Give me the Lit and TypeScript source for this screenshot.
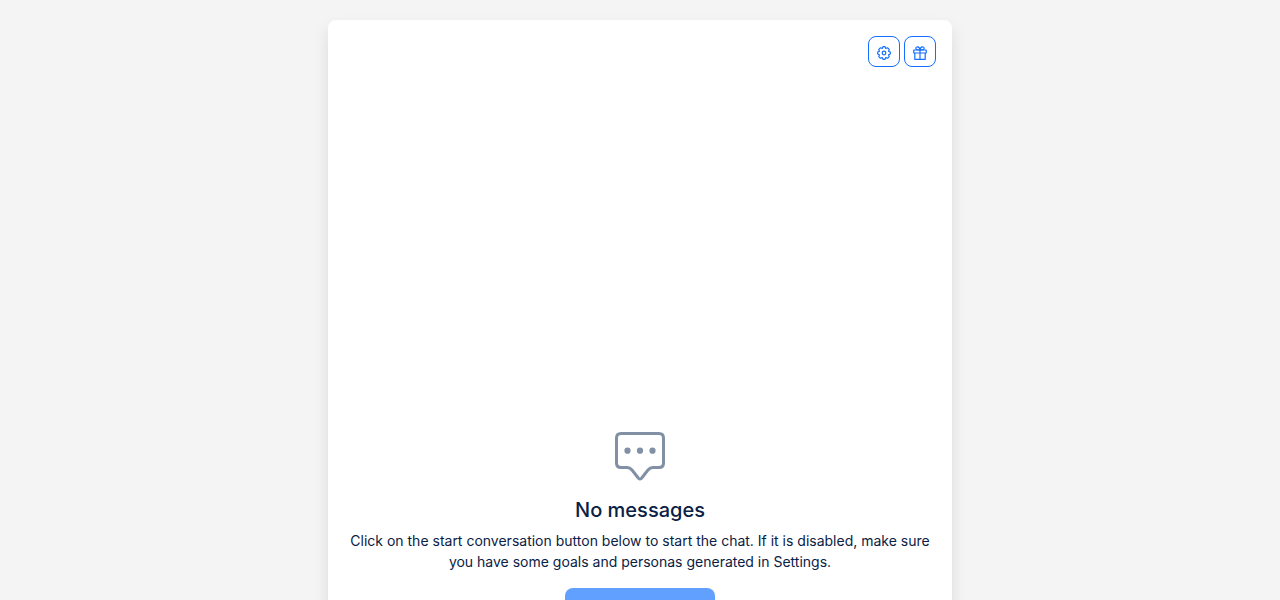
import { LitElement, html, css, svg } from "lit";
import { customElement, property } from "lit/decorators.js";

const gearIcon = svg`
  <path d="M-1-6.300H1L1.800-4.600 3.700-5.200 5.200-3.700 4.600-1.800 6.300-1V1L4.600 1.800 5.200 3.700 3.700 5.200 1.800 4.600 1 6.300H-1L-1.800 4.600-3.700 5.200-5.200 3.700-4.600 1.800-6.300 1V-1L-4.600-1.800-5.200-3.700-3.700-5.200-1.800-4.600Z"/>
  <circle r="1.800"/>`;

const giftIcon = svg`
  <path d="M-6.200-3H6.200V0H-6.200ZM-5.200 0V6.300H5.200V0M0-3V6.300"/>
  <path d="M0-3C-1.500-3-4.200-3-4.200-4.800S-.6-7.200 0-3C.6-7.200 4.200-6.600 4.200-4.800S1.500-3 0-3Z"/>`;

@customElement("app-root")
export class AppRoot extends LitElement {
  @property({ type: Boolean }) ready = false;

  static styles = css`
    :host {
      display: block;
      box-sizing: border-box;
      height: 100vh;
      overflow: auto;
      scrollbar-width: none;
      padding: 20px 16px;
      background: #f4f4f4;
      color: #0a2145;
      font: 400 14px/21px Inter, sans-serif;
    }
    .card {
      box-sizing: border-box;
      max-width: 624px;
      min-height: 984px;
      margin: 0 auto;
      padding: 16px;
      display: flex;
      flex-direction: column;
      background: #fff;
      border-radius: 8px;
      box-shadow: 0 8px 16px rgba(0, 0, 0, 0.1);
    }
    .toolbar {
      display: flex;
      justify-content: flex-end;
      gap: 4px;
    }
    .tool {
      box-sizing: border-box;
      width: 32px;
      height: 31px;
      padding: 2px 0 0;
      display: grid;
      place-items: center;
      color: #146eff;
      background: transparent;
      border: 1px solid currentColor;
      border-radius: 8px;
      cursor: pointer;
    }
    .tool svg {
      width: 14px;
      height: 14px;
      fill: none;
      stroke: currentColor;
      stroke-width: 1.2;
      stroke-linejoin: round;
    }
    .messages {
      flex: 1;
      display: flex;
      flex-direction: column;
      align-items: center;
      justify-content: center;
      text-align: center;
    }
    .bubble {
      width: 50px;
      height: 50px;
      fill: none;
      stroke: #8290a5;
      stroke-width: 3;
      stroke-linejoin: round;
    }
    .bubble circle {
      fill: #8290a5;
      stroke: none;
    }
    h2 {
      margin: 16px 0 8px;
      font-size: 20px;
      line-height: 24px;
      font-weight: 500;
    }
    p {
      margin: 0 0 16px;
    }
    .start {
      width: 150px;
      height: 36px;
      padding: 0;
      color: #fff;
      background: #62a0ff;
      border: 0;
      border-radius: 8px;
      font: inherit;
      font-weight: 500;
    }
  `;

  render() {
    return html`
      <main class="card">
        <div class="toolbar">
          <button class="tool" type="button" aria-label="Settings">
            <svg viewBox="-7 -7 14 14" aria-hidden="true">${gearIcon}</svg>
          </button>
          <button class="tool" type="button" aria-label="Gift">
            <svg viewBox="-7 -7 14 14" aria-hidden="true">${giftIcon}</svg>
          </button>
        </div>
        <section class="messages">
          <svg class="bubble" viewBox="0 0 50 50" aria-hidden="true">
            <path d="M6 1.500H44Q48.500 1.500 48.500 6V31Q48.500 35.500 44 35.500H38Q35 35.500 33 38L26.500 46.200Q25 47.700 23.500 46.200L17 38Q15 35.500 12 35.500H6Q1.500 35.500 1.500 31V6Q1.500 1.500 6 1.500Z"/>
            <circle cx="12.500" cy="18.700" r="3.100"/>
            <circle cx="25" cy="18.700" r="3.100"/>
            <circle cx="37.500" cy="18.700" r="3.100"/>
          </svg>
          <h2>No messages</h2>
          <p>
            Click on the start conversation button below to start the chat. If
            it is disabled, make sure you have some goals and personas generated
            in Settings.
          </p>
          <button class="start" type="button" ?disabled=${!this.ready}>
            Start conversation
          </button>
        </section>
      </main>
    `;
  }
}
